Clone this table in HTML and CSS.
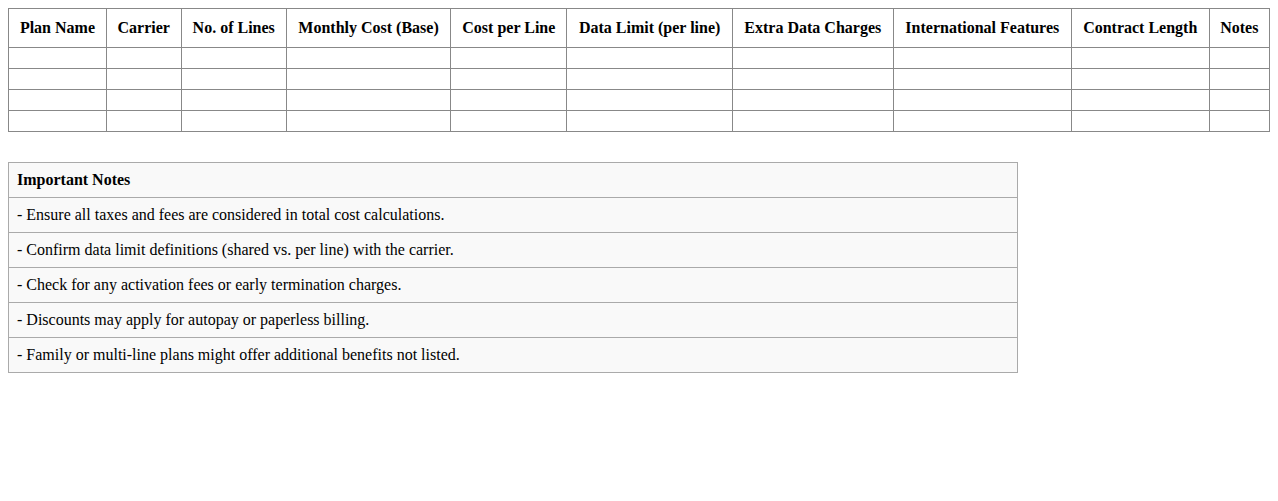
FILE: index.html
```html
<!DOCTYPE html>
<html>
<head>
<meta charset="utf-8">
<link rel="stylesheet" href="styles.css">
</head>
<body>
<table class="plans">
  <thead>
    <tr>
      <th>Plan Name</th>
      <th>Carrier</th>
      <th>No. of Lines</th>
      <th>Monthly Cost (Base)</th>
      <th>Cost per Line</th>
      <th>Data Limit (per line)</th>
      <th>Extra Data Charges</th>
      <th>International Features</th>
      <th>Contract Length</th>
      <th>Notes</th>
    </tr>
  </thead>
  <tbody>
    <tr><td></td><td></td><td></td><td></td><td></td><td></td><td></td><td></td><td></td><td></td></tr>
    <tr><td></td><td></td><td></td><td></td><td></td><td></td><td></td><td></td><td></td><td></td></tr>
    <tr><td></td><td></td><td></td><td></td><td></td><td></td><td></td><td></td><td></td><td></td></tr>
    <tr><td></td><td></td><td></td><td></td><td></td><td></td><td></td><td></td><td></td><td></td></tr>
  </tbody>
</table>
<table class="notes">
  <tr><th>Important Notes</th></tr>
  <tr><td>- Ensure all taxes and fees are considered in total cost calculations.</td></tr>
  <tr><td>- Confirm data limit definitions (shared vs. per line) with the carrier.</td></tr>
  <tr><td>- Check for any activation fees or early termination charges.</td></tr>
  <tr><td>- Discounts may apply for autopay or paperless billing.</td></tr>
  <tr><td>- Family or multi-line plans might offer additional benefits not listed.</td></tr>
</table>
</body>
</html>
```
FILE: styles.css
```css
body {
  margin: 8px;
  font-family: "Liberation Serif", "Times New Roman", serif;
  font-size: 16px;
  color: #000;
  background: #fff;
}
.plans {
  width: 100%;
  border-collapse: collapse;
}
.plans th, .plans td {
  border: 1px solid #888;
  padding: 10px;
}
.plans th {
  font-weight: bold;
  text-align: center;
}
.notes {
  width: 80%;
  margin-top: 30px;
  border-collapse: collapse;
  background: #f9f9f9;
}
.notes th, .notes td {
  border: 1px solid #aaa;
  padding: 8px;
  text-align: left;
}
.notes th {
  font-weight: bold;
}
```
